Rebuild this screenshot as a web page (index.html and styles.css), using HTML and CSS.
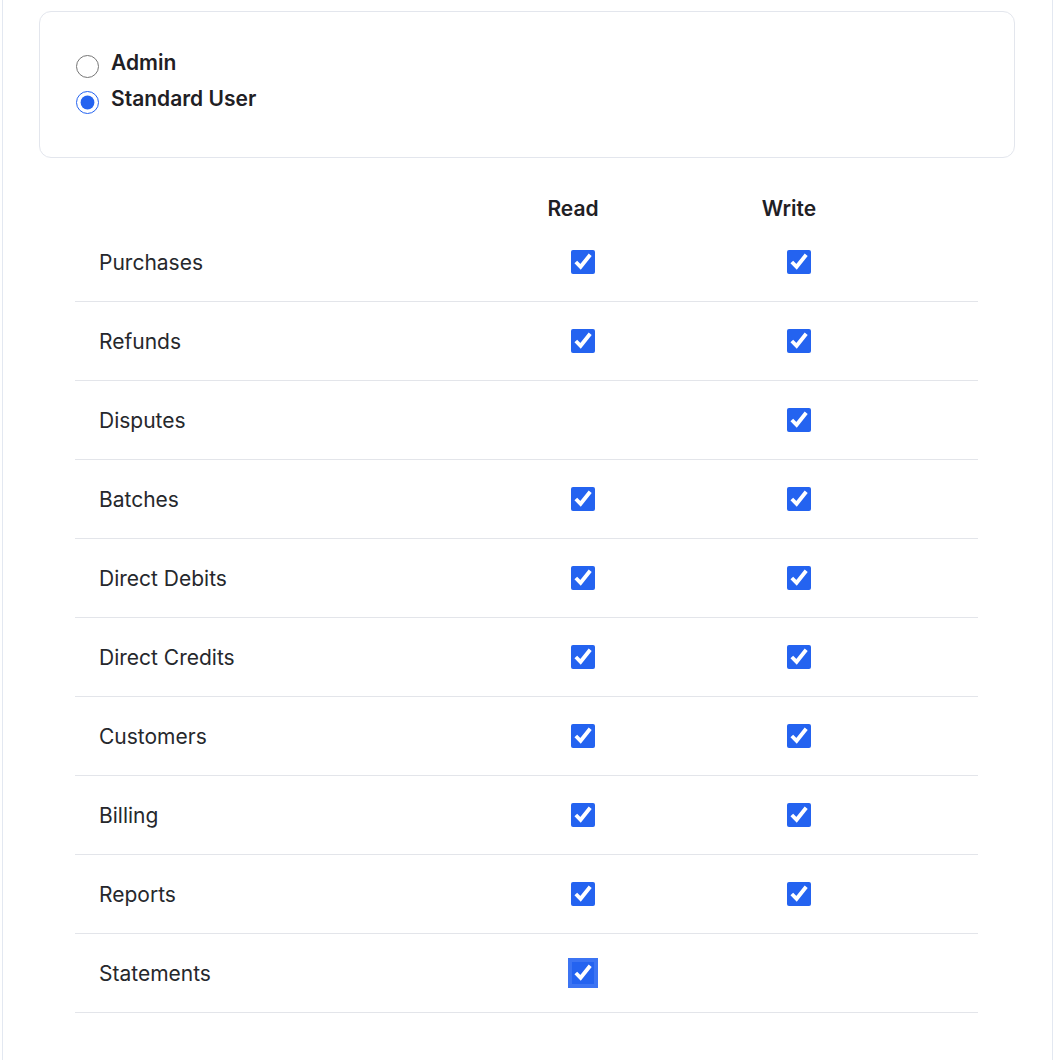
FILE: index.html
```html
<!DOCTYPE html>
<html lang="en">
<head>
<meta charset="utf-8">
<title>Permissions</title>
<link rel="stylesheet" href="styles.css">
</head>
<body>
<div class="page">
  <div class="card">
    <label class="role"><input type="radio" name="role" class="radio"> <span>Admin</span></label>
    <label class="role"><input type="radio" name="role" class="radio" checked> <span>Standard User</span></label>
  </div>
  <div class="table">
    <div class="head">
      <div></div>
      <div class="hcell">Read</div>
      <div class="hcell">Write</div>
      <div></div>
    </div>
    <div class="row"><div class="label">Purchases</div><div class="cell"><input type="checkbox" class="cb" checked></div><div class="cell"><input type="checkbox" class="cb" checked></div><div></div></div>
    <div class="row"><div class="label">Refunds</div><div class="cell"><input type="checkbox" class="cb" checked></div><div class="cell"><input type="checkbox" class="cb" checked></div><div></div></div>
    <div class="row"><div class="label">Disputes</div><div class="cell"></div><div class="cell"><input type="checkbox" class="cb" checked></div><div></div></div>
    <div class="row"><div class="label">Batches</div><div class="cell"><input type="checkbox" class="cb" checked></div><div class="cell"><input type="checkbox" class="cb" checked></div><div></div></div>
    <div class="row"><div class="label">Direct Debits</div><div class="cell"><input type="checkbox" class="cb" checked></div><div class="cell"><input type="checkbox" class="cb" checked></div><div></div></div>
    <div class="row"><div class="label">Direct Credits</div><div class="cell"><input type="checkbox" class="cb" checked></div><div class="cell"><input type="checkbox" class="cb" checked></div><div></div></div>
    <div class="row"><div class="label">Customers</div><div class="cell"><input type="checkbox" class="cb" checked></div><div class="cell"><input type="checkbox" class="cb" checked></div><div></div></div>
    <div class="row"><div class="label">Billing</div><div class="cell"><input type="checkbox" class="cb" checked></div><div class="cell"><input type="checkbox" class="cb" checked></div><div></div></div>
    <div class="row"><div class="label">Reports</div><div class="cell"><input type="checkbox" class="cb" checked></div><div class="cell"><input type="checkbox" class="cb" checked></div><div></div></div>
    <div class="row"><div class="label">Statements</div><div class="cell"><input type="checkbox" class="cb focused" checked></div><div class="cell"></div><div></div></div>
  </div>
</div>
</body>
</html>
```
FILE: styles.css
```css
html, body {
  margin: 0;
  padding: 0;
  background: #ffffff;
}
body {
  font-family: Inter, "Noto Sans", "Liberation Sans", sans-serif;
  color: #222428;
}
.page {
  margin-left: 2px;
  width: 977px;
  min-height: 1049px;
  border-left: 1px solid #e3e8f1;
  border-right: 1px solid #e3e8f1;
  padding: 11px 36px 0 36px;
}
.card {
  border: 1px solid #e3e6ed;
  border-radius: 12px;
  height: 147px;
  padding: 42px 36px 0 36px;
  box-sizing: border-box;
  display: flex;
  flex-direction: column;
  gap: 12px;
  width: 976px;
}
.role {
  display: flex;
  align-items: center;
  gap: 12px;
  height: 24px;
  font-size: 21px;
  font-weight: 600;
  color: #1f2024;
}
.role span {
  position: relative;
  top: -4px;
}
.radio {
  width: 23px;
  height: 23px;
  margin: 0;
  accent-color: #2463f0;
}
.table {
  margin: 37px 0 0 36px;
  width: 903px;
}
.head, .row {
  display: grid;
  grid-template-columns: 400px 216px 216px 71px;
}
.head {
  height: 28px;
  line-height: 28px;
}
.hcell {
  text-align: center;
  padding-right: 20px;
  font-size: 21px;
  font-weight: 600;
  color: #1f2024;
}
.row {
  height: 78px;
  border-bottom: 1px solid #e3e5ea;
  align-items: center;
}
.label {
  padding-left: 24px;
  font-size: 21px;
  font-weight: 400;
  color: #26282c;
}
.cell {
  display: flex;
  justify-content: center;
  align-items: center;
}
.cb {
  width: 24px;
  height: 24px;
  margin: 0;
  accent-color: #2463f0;
}
.focused {
  outline: 4px solid #3c74f3;
  outline-offset: -1px;
  border-radius: 2px;
}
```
